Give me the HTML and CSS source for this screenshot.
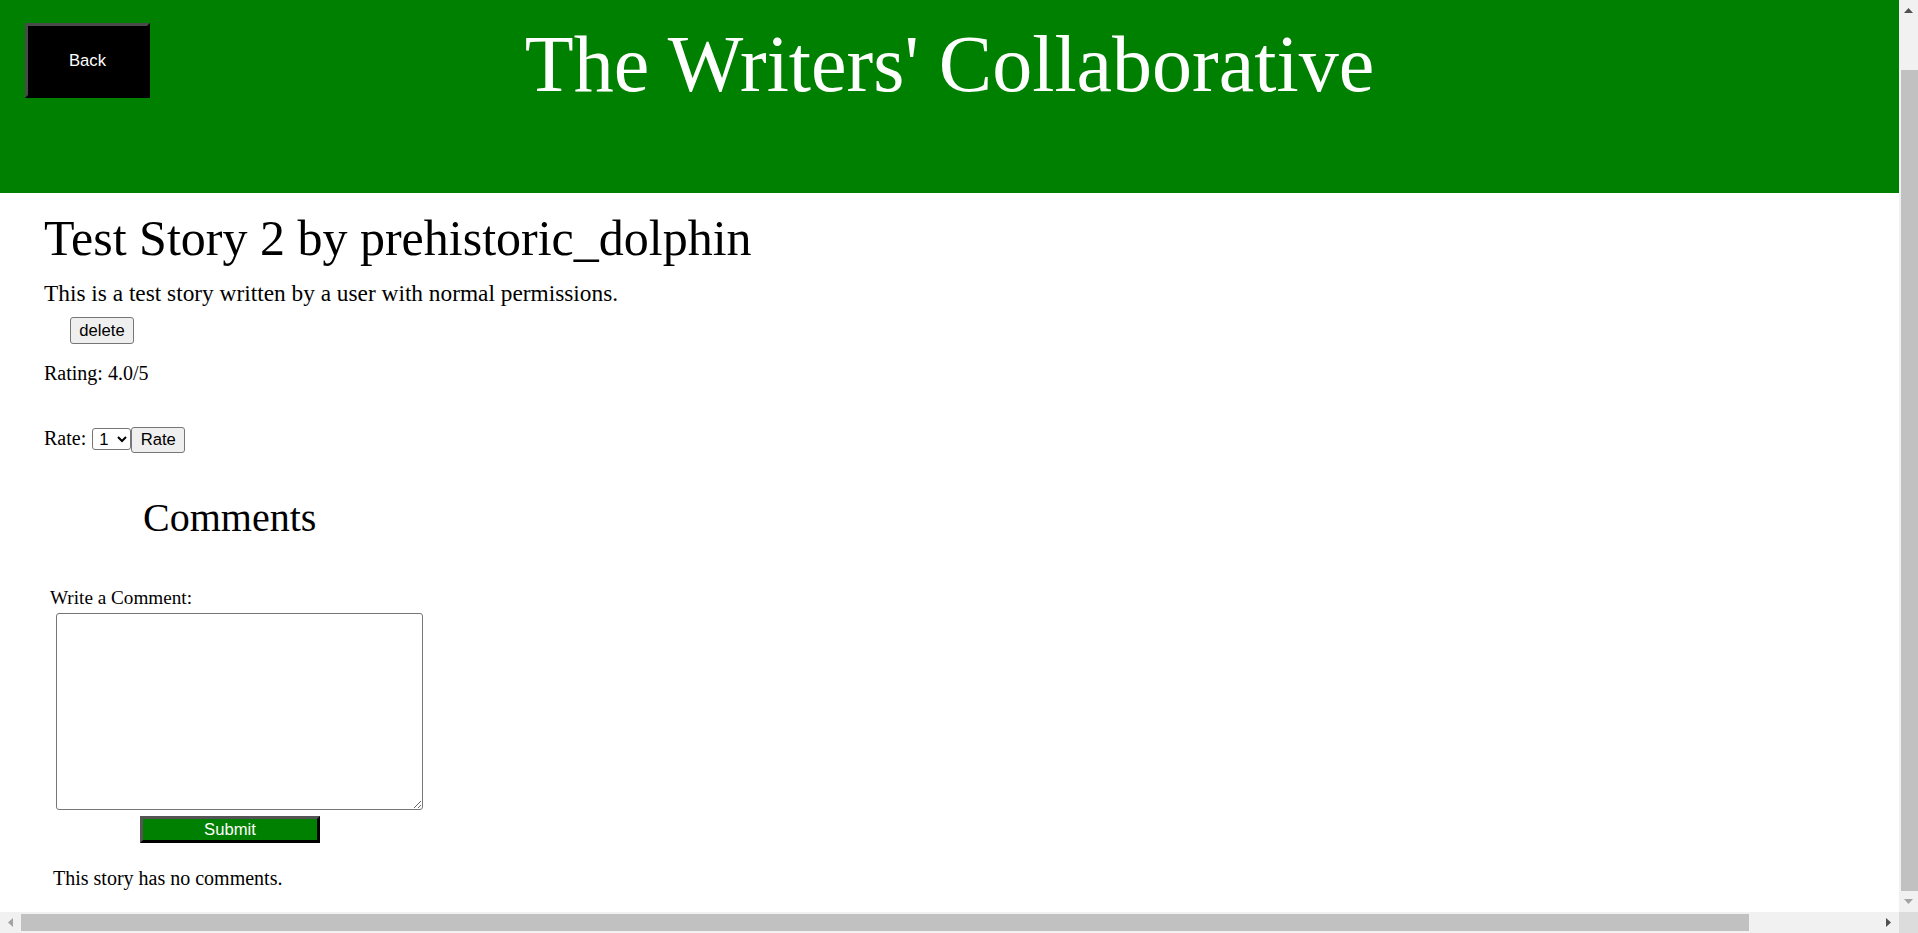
FILE: index.html
```html
<!DOCTYPE html>
<html lang="en">
<head>
<meta charset="utf-8">
<title>The Writers' Collaborative</title>
<link rel="stylesheet" href="styles.css">
</head>
<body>
<header class="site-header">
  <button class="back-btn" type="button">Back</button>
  <h1 class="site-title">The Writers' Collaborative</h1>
  <div class="header-spacer"></div>
</header>
<main class="story">
  <h2 class="story-title">Test Story 2 by prehistoric_dolphin</h2>
  <p class="story-body">This is a test story written by a user with normal permissions.</p>
  <button class="plain-btn delete-btn" type="button">delete</button>
  <p class="rating">Rating: 4.0/5</p>
  <form class="rate-row">
    <label class="rate-label" for="rate">Rate:</label>
    <select id="rate" class="rate-select">
      <option>1</option><option>2</option><option>3</option><option>4</option><option>5</option>
    </select>
    <button class="plain-btn rate-btn" type="button">Rate</button>
  </form>
  <section class="comments">
    <h2 class="comments-title">Comments</h2>
    <form class="comment-form">
      <label class="comment-label" for="comment">Write a Comment:</label>
      <textarea id="comment" class="comment-box"></textarea>
      <button class="submit-btn" type="button">Submit</button>
    </form>
    <p class="no-comments">This story has no comments.</p>
  </section>
</main>

<div class="sb sb-v" aria-hidden="true">
  <div class="sb-arrow">
    <svg width="9" height="5" viewBox="0 0 9 5"><path d="M0 5 L4.5 0 L9 5 Z" fill="#505050"/></svg>
  </div>
  <div class="sb-track sb-track-v"><div class="sb-thumb"></div></div>
  <div class="sb-arrow">
    <svg width="9" height="5" viewBox="0 0 9 5"><path d="M0 0 L9 0 L4.5 5 Z" fill="#a3a3a3"/></svg>
  </div>
</div>
<div class="sb sb-h" aria-hidden="true">
  <div class="sb-arrow">
    <svg width="5" height="9" viewBox="0 0 5 9"><path d="M5 0 L5 9 L0 4.5 Z" fill="#a3a3a3"/></svg>
  </div>
  <div class="sb-track sb-track-h"><div class="sb-thumb sb-thumb-h"></div></div>
  <div class="sb-arrow">
    <svg width="5" height="9" viewBox="0 0 5 9"><path d="M0 0 L5 4.5 L0 9 Z" fill="#505050"/></svg>
  </div>
</div>
<div class="sb-corner" aria-hidden="true"></div>
</body>
</html>
```
FILE: styles.css
```css
html, body {
  margin: 0;
  padding: 0;
}
body {
  margin-right: 19px;
  font-family: "Liberation Serif", "Times New Roman", serif;
  color: #000;
  background: #fff;
}

/* header */
.site-header {
  background: #008000;
  height: 193px;
  display: grid;
  grid-template-columns: 1fr auto 1fr;
  align-items: start;
}
.back-btn {
  justify-self: start;
  margin: 23px 0 0 25px;
  width: 125px;
  height: 75px;
  box-sizing: border-box;
  background: #000;
  color: #fff;
  border-style: solid;
  border-width: 3px;
  border-color: #4a4a4a #000 #000 #4a4a4a;
  font-family: "Liberation Sans", Arial, sans-serif;
  font-size: 16.67px;
  padding: 0;
  cursor: pointer;
}
.site-title {
  margin: 18px 0 0;
  font-weight: normal;
  font-size: 80px;
  line-height: 92px;
  color: #fff;
  white-space: nowrap;
}

/* story */
.story {
  padding: 0 0 60px 44px;
}
.story-title {
  margin: 16px 0 0;
  font-weight: normal;
  font-size: 50px;
  line-height: 58px;
}
.story-body {
  margin: 13px 0 0;
  font-size: 23.33px;
  line-height: 27px;
}
.plain-btn {
  box-sizing: border-box;
  height: 27px;
  padding: 0 7px;
  background: #efefef;
  border: 1px solid #767676;
  border-radius: 3px;
  color: #000;
  font-family: "Liberation Sans", Arial, sans-serif;
  font-size: 16.67px;
}
.delete-btn {
  display: block;
  margin: 10px 0 0 26px;
  width: 64px;
}
.rating {
  margin: 18px 0 0;
  font-size: 20px;
  line-height: 23px;
}
.rate-row {
  display: flex;
  align-items: baseline;
  margin-top: 41.5px;
}
.rate-label {
  font-size: 20px;
  line-height: 23px;
  margin-right: 6px;
}
.rate-select {
  box-sizing: border-box;
  width: 39px;
  height: 22px;
  font-family: "Liberation Sans", Arial, sans-serif;
  font-size: 16.67px;
  border: 1px solid #767676;
  border-radius: 3px;
  background: #fff;
  color: #000;
  padding: 0 0 0 2px;
}
.rate-btn {
  width: 54px;
  height: 26px;
}

/* comments */
.comments-title {
  margin: 42px 0 0 99px;
  font-weight: normal;
  font-size: 40px;
  line-height: 46px;
}
.comment-form {
  margin-top: 46px;
}
.comment-label {
  display: block;
  margin-left: 6px;
  font-size: 19.2px;
  line-height: 22px;
}
.comment-box {
  display: block;
  box-sizing: border-box;
  margin: 4.5px 0 0 12px;
  width: 367px;
  height: 197px;
  border: 1px solid #767676;
  border-radius: 3px;
  padding: 2px;
}
.submit-btn {
  display: block;
  box-sizing: border-box;
  margin: 6px 0 0 96px;
  width: 180px;
  height: 27px;
  background: #008000;
  color: #fff;
  border-style: solid;
  border-width: 3px;
  border-color: #555 #000 #000 #555;
  font-family: "Liberation Sans", Arial, sans-serif;
  font-size: 16.67px;
  padding: 0;
}
.no-comments {
  margin: 23.75px 0 0 9px;
  font-size: 20px;
  line-height: 23px;
}

/* browser-style scrollbars, as in the screenshot */
.sb {
  position: fixed;
  background: #f1f1f1;
  display: flex;
}
.sb-v {
  top: 0;
  right: 0;
  width: 19px;
  height: calc(100% - 21px);
  flex-direction: column;
}
.sb-h {
  left: 0;
  bottom: 0;
  height: 21px;
  width: calc(100% - 19px);
  flex-direction: row;
}
.sb-arrow {
  flex: 0 0 21px;
  display: flex;
  align-items: center;
  justify-content: center;
}
.sb-track {
  flex: 1;
  display: flex;
}
.sb-track-v {
  flex-direction: column;
  padding: 49px 0 0 2px;
}
.sb-thumb {
  flex: 1;
  background: #c1c1c1;
}
.sb-track-h {
  padding: 2px 0 2px 0;
}
.sb-thumb-h {
  flex: 0 0 1728px;
}
.sb-corner {
  position: fixed;
  right: 0;
  bottom: 0;
  width: 19px;
  height: 21px;
  background: #dcdcdc;
}
```
